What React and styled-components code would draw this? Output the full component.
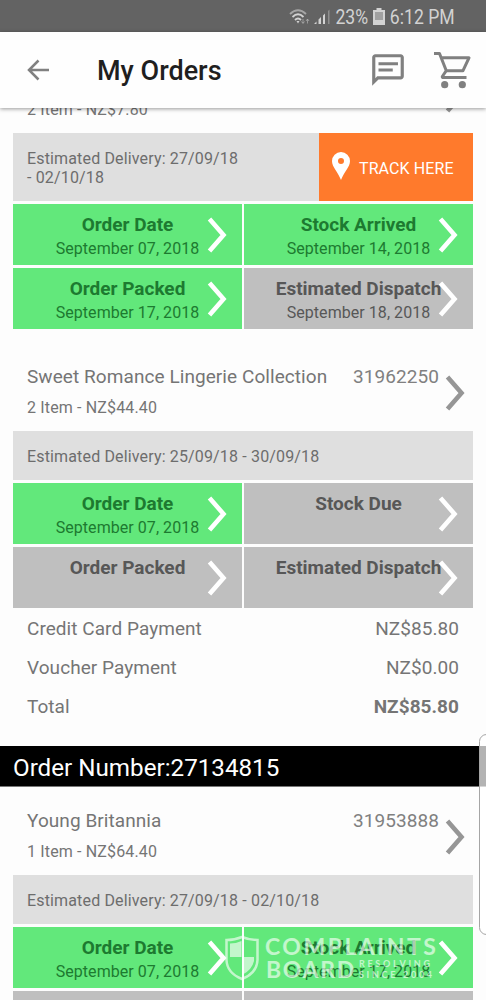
import React from 'react';
import styled, { createGlobalStyle } from 'styled-components';

const GlobalStyle = createGlobalStyle`
  * {
    box-sizing: border-box;
  }

  body {
    margin: 0;
    background-color: #fdfdfd;
    font-family: Roboto, 'Liberation Sans', sans-serif;
    color: #757575;
  }
`;

const Screen = styled.div`
  position: relative;
  display: flex;
  flex-direction: column;
  width: 486px;
  height: 1000px;
  overflow: hidden;
`;

const StatusBar = styled.div`
  flex: none;
  display: flex;
  align-items: center;
  justify-content: flex-end;
  height: 32px;
  padding: 1px 31px 0 0;
  background-color: #636363;
  color: #d2d2d2;
  font-size: 20px;
`;

const WifiIcon = styled.svg`
  width: 22px;
  height: 18px;
  margin-right: 2px;
`;

const SignalIcon = styled.svg`
  width: 18px;
  height: 18px;
`;

const BatteryIcon = styled.svg`
  width: 12px;
  height: 17px;
  margin: 0 -4px 0 5px;
`;

const StatusText = styled.span`
  transform: scaleX(0.88);
  transform-origin: right center;
`;

const AppBar = styled.header`
  position: relative;
  z-index: 1;
  flex: none;
  display: flex;
  align-items: center;
  height: 76px;
  padding: 0 15px 0 24px;
  background-color: #fefefe;
  box-shadow: 0 1px 4px rgba(0, 0, 0, 0.4);
`;

const BackIcon = styled.svg`
  width: 28px;
  height: 28px;
`;

const Title = styled.h1`
  flex: 1;
  margin: 1px 0 0 45px;
  font-size: 27px;
  font-weight: 500;
  line-height: 32px;
  color: #1f1f1f;
`;

const ChatIcon = styled.svg`
  width: 38px;
  height: 38px;
  margin-right: 26px;
`;

const CartIcon = styled.svg`
  width: 38px;
  height: 38px;
`;

const Content = styled.main`
  flex: 1;
  overflow: hidden;
`;

const Scroller = styled.div`
  margin-top: -56px;
`;

const ItemHeader = styled.div`
  display: flex;
  height: 81px;
  padding: 16px 21px 0 27px;
`;

const ItemInfo = styled.div`
  flex: 1;
`;

const ItemName = styled.div`
  height: 22px;
  font-size: 19px;
  line-height: 22px;
  letter-spacing: 0.07px;
  white-space: nowrap;
`;

const ItemPrice = styled.div`
  margin-top: 10px;
  font-size: 16px;
  line-height: 20px;
  letter-spacing: 0.15px;
`;

const ItemNumber = styled.div`
  font-size: 19px;
  line-height: 22px;
  letter-spacing: 0.07px;
  color: #808080;
`;

const ItemChevron = styled.svg`
  width: 20px;
  height: 36px;
  margin: 9px 0 0 6px;
`;

const Panel = styled.div`
  margin: 0 13px;
`;

const DeliveryBar = styled.div`
  display: flex;
  height: ${({ $tall }) => ($tall ? '68px' : '49px')};
  margin-bottom: 3px;
  background-color: #dfdfdf;
`;

const DeliveryText = styled.div`
  flex: 1;
  align-self: center;
  padding: 1px 10px 0 14px;
  font-size: 16px;
  line-height: 19px;
  letter-spacing: 0.15px;
  color: #6d6d6d;
`;

const DeliveryEnd = styled.span`
  display: inline-block;
  white-space: nowrap;
`;

const TrackButton = styled.button`
  display: flex;
  align-items: center;
  width: 154px;
  padding: 2px 0 0 13px;
  border: none;
  background-color: #ff7a2c;
  color: #fff;
  font-family: inherit;
  font-size: 16px;
  letter-spacing: 0.1px;
`;

const PinIcon = styled.svg`
  width: 18px;
  height: 28px;
  margin: -4px 9px 0 0;
`;

const Steps = styled.div`
  display: grid;
  grid-template-columns: 229px 229px;
  grid-auto-rows: 61px;
  gap: 3px 2px;
`;

const Step = styled.div`
  position: relative;
  padding: 10px 0 0;
  text-align: center;
  background-color: ${({ $done }) => ($done ? '#62e87b' : '#bfbfbf')};
  color: ${({ $done }) => ($done ? '#1d7a30' : '#575757')};
`;

const StepTitle = styled.div`
  font-size: 19px;
  font-weight: 700;
  line-height: 22px;
`;

const StepDate = styled.div`
  margin-top: 3px;
  font-size: 16px;
  line-height: 20px;
  letter-spacing: 0.05px;
`;

const StepChevron = styled.svg`
  position: absolute;
  top: 13px;
  right: 15px;
  width: 20px;
  height: 36px;
`;

const Payments = styled.div`
  padding: 2px 27px 0;
`;

const PaymentRow = styled.div`
  display: flex;
  justify-content: space-between;
  height: 39px;
  font-size: 19px;
  line-height: 38px;
  letter-spacing: 0.05px;
`;

const Amount = styled.span`
  font-weight: ${({ $bold }) => ($bold ? 700 : 400)};
`;

const OrderBanner = styled.div`
  height: 41px;
  margin: 19px 0 7px;
  padding-left: 13px;
  border-bottom: 1px solid #777;
  background-color: #000;
  color: #fff;
  font-size: 24.2px;
  line-height: 44px;
`;

const EdgeHandle = styled.div`
  position: absolute;
  z-index: 2;
  top: 734px;
  right: -8px;
  width: 15px;
  height: 201px;
  border: 1px solid #a5a5a5;
  border-radius: 8px;
  background-color: rgba(255, 255, 255, 0.7);
`;

const Watermark = styled.div`
  position: absolute;
  z-index: 3;
  top: 935px;
  left: 224px;
  display: flex;
  color: #fff;
  opacity: 0.62;
`;

const Shield = styled.svg`
  width: 36px;
  height: 46px;
  margin-right: 5px;
`;

const Brand = styled.div`
  font-family: Lato, sans-serif;
  font-size: 23px;
  font-weight: 700;
  line-height: 23px;
  letter-spacing: ${({ $spacing }) => $spacing};
`;

const BrandBottom = styled.div`
  display: flex;
  padding-left: 1px;
`;

const Tagline = styled.div`
  margin: 0 0 0 3px;
  font-family: Lato, sans-serif;
  font-size: 9px;
  font-weight: 700;
  line-height: 11px;
  letter-spacing: 2.7px;
`;

const Chevron = ({ as: Svg, color }) => (
    <Svg viewBox="0 0 20 36">
        <path d="M2.5 2 L16.5 18 L2.5 34" fill="none" stroke={color} strokeWidth="4.6" />
    </Svg>
);

const Item = ({ name, number, price, delivery, tracked, steps }) => (
    <>
        <ItemHeader>
            <ItemInfo>
                <ItemName>{name}</ItemName>
                <ItemPrice>{price}</ItemPrice>
            </ItemInfo>
            <ItemNumber>{number}</ItemNumber>
            <Chevron as={ItemChevron} color="#969696" />
        </ItemHeader>
        <Panel>
            <DeliveryBar $tall={tracked}>
                <DeliveryText>
                    Estimated Delivery: {delivery[0]} <DeliveryEnd>- {delivery[1]}</DeliveryEnd>
                </DeliveryText>
                {tracked && (
                    <TrackButton>
                        <PinIcon viewBox="0 0 18 28">
                            <path
                                fill="#fff"
                                fillRule="evenodd"
                                d="M9 0a9 9 0 0 0-9 9c0 6 6 11 9 19 3-8 9-13 9-19a9 9 0 0 0-9-9zm0 6a3 3 0 1 1 0 6 3 3 0 0 1 0-6z"
                            />
                        </PinIcon>
                        TRACK HERE
                    </TrackButton>
                )}
            </DeliveryBar>
            <Steps>
                {steps.map((step) => (
                    <Step key={step.title} $done={step.done}>
                        <StepTitle>{step.title}</StepTitle>
                        {step.date && <StepDate>{step.date}</StepDate>}
                        <Chevron as={StepChevron} color="#fff" />
                    </Step>
                ))}
            </Steps>
        </Panel>
    </>
);

const firstSteps = [
    { title: 'Order Date', date: 'September 07, 2018', done: true },
    { title: 'Stock Arrived', date: 'September 14, 2018', done: true },
    { title: 'Order Packed', date: 'September 17, 2018', done: true },
    { title: 'Estimated Dispatch', date: 'September 18, 2018' },
];

const secondSteps = [
    { title: 'Order Date', date: 'September 07, 2018', done: true },
    { title: 'Stock Due' },
    { title: 'Order Packed' },
    { title: 'Estimated Dispatch' },
];

const thirdSteps = [
    { title: 'Order Date', date: 'September 07, 2018', done: true },
    { title: 'Stock Arrived', date: 'September 17, 2018', done: true },
    { title: 'Order Packed' },
    { title: 'Estimated Dispatch' },
];

const ItemGap = styled.div`
  height: 21px;
`;

const App = () => {
    return (
        <Screen>
            <GlobalStyle />
            <StatusBar>
                <WifiIcon viewBox="0 0 22 18" fill="none" stroke="#d2d2d2" strokeWidth="1.8">
                    <path d="M1 6Q9 -1.500 17 6" opacity="0.6" />
                    <path d="M3.500 9Q9 3.500 14.500 9" />
                    <path d="M6 12Q9 9 12 12" />
                    <path d="M7.500 13L9 15.500L10.500 13z" fill="#d2d2d2" stroke="none" />
                    <path d="M14 11v4M12.500 13.500L14 15.500L15.500 13.500M18.500 15.500v-4M17 13L18.500 11L20 13" strokeWidth="1" opacity="0.5" />
                </WifiIcon>
                <SignalIcon viewBox="0 0 18 18" fill="#d2d2d2">
                    <path d="M1 16l2.500-2.500V16zM5.500 11.500L8 9v7H5.500zM10 7.500L12 5.500V16H10z" />
                    <path d="M15 3l1.500-1.500V16H15z" opacity="0.4" />
                </SignalIcon>
                <StatusText>23%</StatusText>
                <BatteryIcon viewBox="0 0 12 17">
                    <path d="M3.500 0h5v2H12v15H0V2h3.500z" fill="#d2d2d2" />
                    <path d="M2 4h8v8H2z" fill="#a0a0a0" />
                </BatteryIcon>
                <StatusText>6:12 PM</StatusText>
            </StatusBar>
            <AppBar>
                <BackIcon viewBox="0 0 28 28">
                    <path d="M25 14H5M14.500 4.500L5 14l9.500 9.500" fill="none" stroke="#808080" strokeWidth="2.500" />
                </BackIcon>
                <Title>My Orders</Title>
                <ChatIcon viewBox="0 0 24 24" fill="#808080">
                    <path d="M4 4h16v12H5.170L4 17.170V4m0-2c-1.100 0-1.990.9-1.990 2L2 22l4-4h14c1.100 0 2-.9 2-2V4c0-1.100-.9-2-2-2H4zm2 9h9v1.900H6V11zm0-3.900h12.300V9H6V7.100z" />
                </ChatIcon>
                <CartIcon viewBox="0 0 38 38">
                    <path
                        d="M1 2.500H6.500L13.300 19.700H30L36 6.800H8.500M13.300 19.700L9.300 25.500Q9 26.600 10.500 26.600H33.500"
                        fill="none"
                        stroke="#808080"
                        strokeWidth="3"
                        strokeLinejoin="round"
                    />
                    <circle cx="11.700" cy="33.700" r="3.600" fill="#808080" />
                    <circle cx="29.300" cy="33.700" r="3.600" fill="#808080" />
                </CartIcon>
            </AppBar>
            <Content>
                <Scroller>
                    <Item price="2 Item - NZ$7.80" delivery={['27/09/18', '02/10/18']} tracked steps={firstSteps} />
                    <ItemGap />
                    <Item
                        name="Sweet Romance Lingerie Collection"
                        number="31962250"
                        price="2 Item - NZ$44.40"
                        delivery={['25/09/18', '30/09/18']}
                        steps={secondSteps}
                    />
                    <Payments>
                        <PaymentRow>
                            <span>Credit Card Payment</span>
                            <Amount>NZ$85.80</Amount>
                        </PaymentRow>
                        <PaymentRow>
                            <span>Voucher Payment</span>
                            <Amount>NZ$0.00</Amount>
                        </PaymentRow>
                        <PaymentRow>
                            <span>Total</span>
                            <Amount $bold>NZ$85.80</Amount>
                        </PaymentRow>
                    </Payments>
                    <OrderBanner>Order Number:27134815</OrderBanner>
                    <Item
                        name="Young Britannia"
                        number="31953888"
                        price="1 Item - NZ$64.40"
                        delivery={['27/09/18', '02/10/18']}
                        steps={thirdSteps}
                    />
                </Scroller>
            </Content>
            <EdgeHandle />
            <Watermark>
                <Shield viewBox="0 0 36 46">
                    <path d="M18 2Q25 5 33.500 5V25Q33 38 18 44Q3 38 2.500 25V5Q11 5 18 2z" fill="none" stroke="#fff" strokeWidth="2.500" />
                    <path d="M17.500 6Q12 8.500 6 8.500V22H17.500zM18 22H30V26Q28 35 18 40z" fill="#fff" />
                </Shield>
                <div>
                    <Brand $spacing="2.5px">COMPLAINTS</Brand>
                    <BrandBottom>
                        <Brand $spacing="1.7px">BOARD</Brand>
                        <Tagline>
                            RESOLVING
                            <br />
                            SINCE 2004
                        </Tagline>
                    </BrandBottom>
                </div>
            </Watermark>
        </Screen>
    );
};

export default App;
